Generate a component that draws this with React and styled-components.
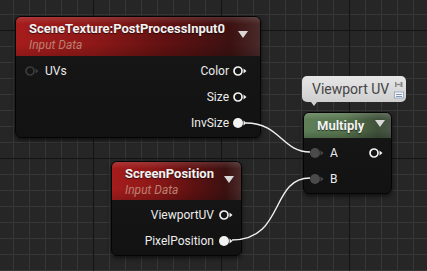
import styled, { createGlobalStyle, css } from "styled-components";

const GlobalStyle = createGlobalStyle`
  html, body {
    margin: 0;
    padding: 0;
    background: #262626;
    overflow: hidden;
  }
`;

const Canvas = styled.div`
  position: relative;
  width: 427px;
  height: 271px;
  overflow: hidden;
  font-family: Roboto, "Liberation Sans", sans-serif;
  background-color: #262626;
  background-image: linear-gradient(to right, #141414 1px, transparent 1px),
    linear-gradient(to bottom, #141414 1px, transparent 1px),
    linear-gradient(to right, #373737 1px, transparent 1px),
    linear-gradient(to bottom, #373737 1px, transparent 1px);
  background-size: 128px 128px, 128px 128px, 16px 16px, 16px 16px;
  background-position: 93px 30px, 93px 30px, 13px 14px, 13px 14px;
`;

const Wires = styled.svg`
  position: absolute;
  inset: 0;
  pointer-events: none;
  z-index: 2;
`;

const headerStyles = {
  red: css`
    background: linear-gradient(
        180deg,
        rgba(255, 255, 255, 0.12) 0%,
        rgba(255, 255, 255, 0) 18%,
        rgba(0, 0, 0, 0) 70%,
        rgba(0, 0, 0, 0.15) 100%
      ),
      linear-gradient(
        90deg,
        #a61c1c 0%,
        #8e1818 32%,
        #601111 62%,
        #3c1111 88%,
        #4a2a2a 100%
      );
  `,
  green: css`
    background: linear-gradient(
        180deg,
        rgba(255, 255, 255, 0.16) 0%,
        rgba(255, 255, 255, 0) 25%,
        rgba(0, 0, 0, 0) 70%,
        rgba(0, 0, 0, 0.18) 100%
      ),
      linear-gradient(90deg, #5f7f58 0%, #587650 45%, #3f5139 85%, #4a5648 100%);
  `,
};

const Node = styled.div`
  position: absolute;
  left: ${(p) => p.$x}px;
  top: ${(p) => p.$y}px;
  width: ${(p) => p.$w}px;
  border-radius: 6px;
  background: linear-gradient(180deg, #171717 0%, #121212 100%);
  border: 1px solid #050505;
  box-shadow: 0 2px 4px rgba(0, 0, 0, 0.6);
  overflow: hidden;
  z-index: 1;
`;

const Header = styled.div`
  position: relative;
  height: ${(p) => p.$h}px;
  padding: 1px 0 0 ${(p) => p.$pad}px;
  box-sizing: border-box;
  display: flex;
  flex-direction: column;
  justify-content: center;
  ${(p) => headerStyles[p.$tone]}
`;

const Title = styled.div`
  color: #f2f2f2;
  font-weight: 700;
  font-size: 13px;
  line-height: 16px;
  text-shadow: 0 1px 1px rgba(0, 0, 0, 0.6);
  white-space: nowrap;
`;

const Subtitle = styled.div`
  color: #b9806f;
  font-style: italic;
  font-size: 12px;
  line-height: 16px;
`;

const Collapse = styled.span`
  position: absolute;
  right: ${(p) => p.$right}px;
  top: ${(p) => p.$top}px;
  width: 0;
  height: 0;
  border-left: 5.5px solid transparent;
  border-right: 5.5px solid transparent;
  border-top: 7px solid #d8d8d8;
`;

const Body = styled.div`
  padding: 2px 0 1px;
  display: grid;
  grid-auto-rows: 26px;
`;

const Row = styled.div`
  display: flex;
  align-items: center;
  justify-content: space-between;
  padding: 0 ${(p) => p.$right}px 0 ${(p) => p.$left}px;
  color: #ececec;
  font-size: 12px;
`;

const Side = styled.div`
  display: flex;
  align-items: center;
  gap: ${(p) => p.$gap}px;
`;

const Comment = styled.div`
  position: absolute;
  left: 302px;
  top: 76px;
  width: 104px;
  height: 26px;
  box-sizing: border-box;
  padding-left: 10px;
  display: flex;
  align-items: center;
  border-radius: 5px;
  background: linear-gradient(180deg, #e6e6e6 0%, #cfcfcf 100%);
  color: #444;
  font-size: 14px;
  z-index: 3;

  &::after {
    content: "";
    position: absolute;
    left: 9px;
    bottom: -4px;
    border-left: 3px solid transparent;
    border-right: 3px solid transparent;
    border-top: 4px solid #cfcfcf;
  }
`;

const CommentIcons = styled.svg`
  position: absolute;
  right: 2px;
  top: 3px;
`;

function Pin({ filled, color = "#f2f2f2" }) {
  return (
    <svg width="14" height="10" viewBox="0 0 14 10">
      {filled ? (
        <circle cx="5" cy="5" r="5" fill={color} />
      ) : (
        <circle cx="5" cy="5" r="4" fill="none" stroke={color} strokeWidth="1.7" />
      )}
      <polygon points="10.5,2.5 13.5,5 10.5,7.5" fill={color} />
    </svg>
  );
}

export default function App() {
  return (
    <>
      <GlobalStyle />
      <Canvas>
        <Node $x={15} $y={16} $w={244}>
          <Header $h={39} $pad={13} $tone="red">
            <Title>SceneTexture:PostProcessInput0</Title>
            <Subtitle>Input Data</Subtitle>
            <Collapse $right={12} $top={14} />
          </Header>
          <Body>
            <Row $left={9} $right={13}>
              <Side $gap={6}>
                <Pin color="#3c3c3c" />
                UVs
              </Side>
              <Side $gap={4}>
                Color
                <Pin />
              </Side>
            </Row>
            <Row $left={9} $right={13}>
              <span />
              <Side $gap={4}>
                Size
                <Pin />
              </Side>
            </Row>
            <Row $left={9} $right={13}>
              <span />
              <Side $gap={4}>
                InvSize
                <Pin filled />
              </Side>
            </Row>
          </Body>
        </Node>

        <Node $x={111} $y={161} $w={129}>
          <Header $h={38} $pad={13} $tone="red">
            <Title>ScreenPosition</Title>
            <Subtitle>Input Data</Subtitle>
            <Collapse $right={7} $top={14} />
          </Header>
          <Body>
            <Row $left={9} $right={8}>
              <span />
              <Side $gap={5}>
                ViewportUV
                <Pin />
              </Side>
            </Row>
            <Row $left={9} $right={8}>
              <span />
              <Side $gap={5}>
                PixelPosition
                <Pin filled />
              </Side>
            </Row>
          </Body>
        </Node>

        <Node $x={303} $y={112} $w={87}>
          <Header $h={25} $pad={13} $tone="green">
            <Title>Multiply</Title>
            <Collapse $right={6} $top={7} />
          </Header>
          <Body>
            <Row $left={6} $right={8}>
              <Side $gap={6}>
                <Pin filled color="#4a4a4a" />A
              </Side>
              <Pin />
            </Row>
            <Row $left={6} $right={8}>
              <Side $gap={6}>
                <Pin filled color="#4a4a4a" />B
              </Side>
              <span />
            </Row>
          </Body>
        </Node>

        <Comment>
          Viewport UV
          <CommentIcons width="10" height="20" viewBox="0 0 10 20">
            <rect x="1" y="3" width="1.5" height="5" fill="#888" />
            <rect x="2.5" y="4.8" width="4" height="1.4" fill="#888" />
            <rect x="6.5" y="3" width="2" height="5" fill="#888" />
            <rect x="0.5" y="13" width="9" height="6" fill="#f4f4f4" stroke="#8aa0c0" strokeWidth="0.8" />
            <rect x="2" y="15" width="6" height="0.8" fill="#6a7fa0" />
            <rect x="2" y="17" width="6" height="0.8" fill="#6a7fa0" />
          </CommentIcons>
        </Comment>

        <Wires width="427" height="271" viewBox="0 0 427 271">
          <path
            d="M246 123 C 280 123, 282 152, 310 152"
            fill="none"
            stroke="#f0f0f0"
            strokeWidth="1.4"
          />
          <path
            d="M232 240 C 285 240, 270 178, 310 178"
            fill="none"
            stroke="#f0f0f0"
            strokeWidth="1.4"
          />
        </Wires>
      </Canvas>
    </>
  );
}
